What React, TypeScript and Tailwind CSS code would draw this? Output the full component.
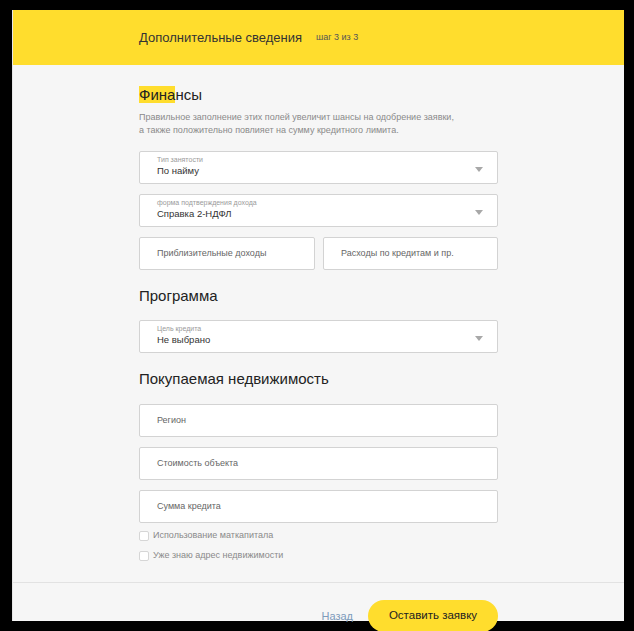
import React from "react";

const font = { fontFamily: '"Liberation Sans", Arial, sans-serif' };

interface SelectProps {
  label: string;
  value: string;
}

const SelectField: React.FC<SelectProps> = ({ label, value }) => (
  <div className="relative h-[33px] w-full rounded-[2px] border border-[#d3d3d3] bg-white pl-[17px]">
    <p className="pt-[3px] text-[7px] leading-[9px] text-[#9a9a9a]">{label}</p>
    <p className="text-[9.5px] leading-[13px] text-[#333]">{value}</p>
    <span className="absolute right-[14px] top-[15px] h-0 w-0 border-x-[4px] border-t-[5px] border-x-transparent border-t-[#a8a8a8]" />
  </div>
);

const InputField: React.FC<{ placeholder: string; className?: string }> = ({
  placeholder,
  className = "w-full",
}) => (
  <div
    className={`flex h-[33px] items-center rounded-[2px] border border-[#d3d3d3] bg-white pl-[17px] ${className}`}
  >
    <span className="text-[9px] text-[#666]">{placeholder}</span>
  </div>
);

const Check: React.FC<{ label: string }> = ({ label }) => (
  <label className="flex h-[20px] items-center gap-[4px]">
    <span className="h-[10px] w-[10px] rounded-[2px] border border-[#d6d6d6] bg-white" />
    <span className="text-[9px] text-[#8a8a8a]">{label}</span>
  </label>
);

export default function App() {
  return (
    <div
      className="h-[631px] w-[634px] overflow-hidden bg-black pl-[12px] pr-[10px] pt-[10px]"
      style={font}
    >
      <div className="h-[611px] border-l border-[#e6e6e6] bg-[#f6f6f6]">
        <header className="flex h-[55px] items-center gap-[14px] bg-[#ffdd2d] pl-[126px]">
          <h1 className="text-[13px] text-[#333]">Дополнительные сведения</h1>
          <span className="text-[9px] text-[#555]">шаг 3 из 3</span>
        </header>

        <main className="w-[485px] pl-[126px]">
          <h2 className="mt-[20px] text-[15px] leading-[20px] text-[#222]">
            <span className="bg-[#ffdd2d]">Фина</span>нсы
          </h2>
          <p className="mt-[6px] text-[9px] leading-[13px] text-[#8a8a8a]">
            Правильное заполнение этих полей увеличит шансы на одобрение заявки,
            <br />а также положительно повлияет на сумму кредитного лимита.
          </p>

          <div className="mt-[14px] flex flex-col gap-[10px]">
            <SelectField label="Тип занятости" value="По найму" />
            <SelectField label="форма подтверждения дохода" value="Справка 2-НДФЛ" />
            <div className="flex gap-[8px]">
              <InputField placeholder="Приблизительные доходы" className="w-[176px]" />
              <InputField placeholder="Расходы по кредитам и пр." className="flex-1" />
            </div>
          </div>

          <h2 className="mt-[16px] text-[15px] leading-[20px] text-[#222]">Программа</h2>
          <div className="mt-[14px]">
            <SelectField label="Цель кредита" value="Не выбрано" />
          </div>

          <h2 className="mt-[16px] text-[15px] leading-[20px] text-[#222]">
            Покупаемая недвижимость
          </h2>
          <div className="mt-[15px] flex flex-col gap-[10px]">
            <InputField placeholder="Регион" />
            <InputField placeholder="Стоимость объекта" />
            <InputField placeholder="Сумма кредита" />
          </div>

          <div className="mt-[3px]">
            <Check label="Использование маткапитала" />
            <Check label="Уже знаю адрес недвижимости" />
          </div>
        </main>

        <div className="mt-[16px] border-t border-[#e2e2e2]" />

        <footer className="mt-[17px] flex w-[485px] items-center justify-end gap-[15px]">
          <button className="text-[11px] text-[#7d9bbb]">Назад</button>
          <button className="h-[32px] w-[130px] rounded-full bg-[#ffdd2d] text-[11.5px] text-[#222]">
            Оставить заявку
          </button>
        </footer>
      </div>
    </div>
  );
}
